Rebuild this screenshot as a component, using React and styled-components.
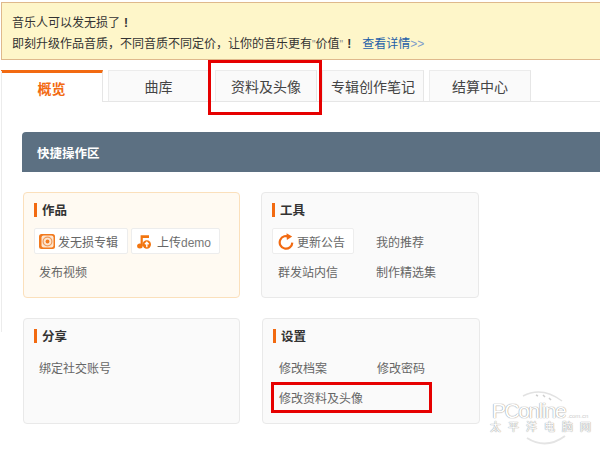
import React from "react";
import styled, { createGlobalStyle } from "styled-components";

const Global = createGlobalStyle`
  html, body { margin: 0; padding: 0; background: #fff; }
  body { font-family: "Noto Sans CJK SC", "Liberation Sans", sans-serif; font-size: 12px; color: #666; }
  * { box-sizing: border-box; }
`;

const Page = styled.div`
  position: relative;
  width: 600px;
  height: 450px;
  overflow: hidden;
  padding-top: 2px;
`;

const Notice = styled.div`
  height: 58px;
  margin-left: 1px;
  padding: 9px 0 0 10px;
  background: #fef6c9;
  border-top: 1px solid #dfb98c;
  border-bottom: 1px solid #dfb98c;
  border-left: 1px solid #dfb98c;
  color: #333;
  line-height: 20px;
`;

const NoticeLine = styled.div`
  white-space: nowrap;
`;

const Quote = styled.span`
  font-family: "Liberation Sans", sans-serif;
  color: #888;
  font-size: 10px;
`;

const Bang = styled.span`
  display: inline-block;
  width: 12px;
  text-align: center;
  font-weight: 700;
  font-family: "Liberation Sans", sans-serif;
`;

const DetailLink = styled.a`
  margin-left: 7px;
  color: #1f5fa8;
`;

const Arrows = styled.span`
  color: #7d9ccb;
  font-family: "Liberation Sans", sans-serif;
`;

const Tabs = styled.div`
  display: flex;
  height: 32px;
  margin: 10px 0 0 1px;
  border-bottom: 1px solid #e6e6e6;
`;

const Tab = styled.div`
  width: ${(p) => p.$w || 102}px;
  height: ${(p) => (p.$active ? "32px" : "31px")};
  margin-left: ${(p) => (p.$gap != null ? p.$gap : 5)}px;
  padding-bottom: ${(p) => (p.$active ? 0 : 1)}px;
  display: flex;
  align-items: center;
  justify-content: center;
  font-size: 14px;
  color: ${(p) => (p.$active ? "#f26a11" : "#444")};
  font-weight: ${(p) => (p.$active ? 700 : 400)};
  background: ${(p) => (p.$active ? "#fff" : "#fafafa")};
  border-top: ${(p) => (p.$active ? "3px solid #f26a11" : "1px solid #ececec")};
  border-left: ${(p) => (p.$active ? "none" : "1px solid #ececec")};
  border-right: 1px solid #e6e6e6;
`;

const Panel = styled.div`
  position: relative;
  padding: 30px 0 0 22px;

  &::before {
    content: "";
    position: absolute;
    left: 1px;
    top: -31px;
    width: 1px;
    height: 261px;
    background: #ececec;
  }
`;

const QuickBar = styled.div`
  height: 40px;
  padding-left: 15px;
  display: flex;
  align-items: center;
  background: #5c7082;
  border-top-left-radius: 4px;
  color: #fff;
  font-weight: 700;
  font-size: 12.5px;
`;

const CardRow = styled.div`
  display: flex;
  gap: ${(p) => p.$gap}px;
  margin: 20px 0 0 1px;
`;

const Card = styled.section`
  width: ${(p) => (p.$left ? 217 : 218)}px;
  height: 106px;
  padding: 10px 0 0 10px;
  background: ${(p) => (p.$warm ? "#fffaf2" : "#fafafa")};
  border: 1px solid ${(p) => (p.$warm ? "#fbe0bc" : "#e9e9e9")};
  border-radius: 4px;
`;

const CardTitle = styled.h3`
  margin: 0;
  height: 14px;
  padding-left: 5px;
  border-left: 3px solid #f26a11;
  color: #333;
  font-size: 12.5px;
  font-weight: 700;
  line-height: 14px;
`;

const Items = styled.div`
  display: flex;
  flex-wrap: wrap;
  margin-top: 11px;
  row-gap: 4px;
`;

const LinkItem = styled.div`
  width: ${(p) => p.$w || 98}px;
  height: 26px;
  padding-left: ${(p) => p.$pl || 6}px;
  display: flex;
  align-items: center;
  white-space: nowrap;
  color: #666;
`;

const IconButton = styled.div`
  width: ${(p) => p.$w}px;
  height: 26px;
  margin-right: ${(p) => p.$mr || 0}px;
  padding-left: ${(p) => p.$pl || 4}px;
  display: flex;
  align-items: center;
  gap: ${(p) => p.$iconGap || 3}px;
  white-space: nowrap;
  background: #fff;
  border: 1px solid #ededed;
  border-radius: 2px;
  color: #666;
`;

const Latin = styled.span`
  font-family: "Liberation Sans", sans-serif;
  color: #777;
`;

const RedBox = styled.div`
  position: absolute;
  left: ${(p) => p.$x}px;
  top: ${(p) => p.$y}px;
  width: ${(p) => p.$w}px;
  height: ${(p) => p.$h}px;
  border: 3px solid #e60000;
`;

const Watermark = styled.div`
  position: absolute;
  left: 490px;
  top: 388px;
  width: 104px;
  height: 60px;
  color: #fff;
`;

const WatermarkArc = styled.svg`
  position: absolute;
  left: 0;
  top: 0;
`;

const WatermarkName = styled.div`
  position: absolute;
  left: 2px;
  top: 14px;
  font-family: "Liberation Sans", sans-serif;
  font-size: 21px;
  line-height: 17px;
  letter-spacing: -1.5px;
  color: #fff;
  text-shadow: 0 0 1px #999, 0 0 1px #999;
  white-space: nowrap;
`;

const WatermarkDomain = styled.span`
  margin-left: 2px;
  font-size: 6px;
  letter-spacing: 0;
  color: #ccc;
  text-shadow: none;
`;

const WatermarkCn = styled.div`
  position: absolute;
  left: 0;
  top: 31px;
  font-size: 11px;
  line-height: 14px;
  letter-spacing: 7px;
  color: #fff;
  text-shadow: 0 0 1px #999, 0 0 1px #999;
  white-space: nowrap;
`;

const DiscIcon = () => (
  <svg width="16" height="15" viewBox="0 0 16 15">
    <rect x="0" y="0" width="16" height="15" rx="2.5" fill="#f27a1e" />
    <rect x="2.5" y="1.5" width="12" height="12" rx="2" fill="#fde6d0" />
    <circle cx="8.5" cy="7.5" r="4.4" fill="none" stroke="#ef9a5c" strokeWidth="1.2" />
    <circle cx="8.5" cy="7.5" r="1.9" fill="#f27a1e" />
  </svg>
);

const MusicUploadIcon = () => (
  <svg width="14" height="15" viewBox="0 0 14 15">
    <path d="M3.6 11.5V1.2H12V4H5.8V12" fill="#f2750f" />
    <ellipse cx="2.9" cy="12" rx="2.8" ry="2.5" fill="#f2750f" />
    <circle cx="9.8" cy="10.5" r="4.2" fill="#f2750f" />
    <path d="M9.8 13.2V8.6M7.9 10.3L9.8 8.2L11.7 10.3" fill="none" stroke="#fff" strokeWidth="1.4" />
  </svg>
);

const RefreshIcon = () => (
  <svg width="16" height="17" viewBox="0 0 16 17">
    <path d="M11.6 4.2A6.3 6.3 0 1 0 14.3 9.6" fill="none" stroke="#f26a11" strokeWidth="2.2" />
    <path d="M8.5 0.3L14.2 3.6L8.9 7Z" fill="#f26a11" />
  </svg>
);

const Arc = () => (
  <WatermarkArc width="104" height="60" viewBox="0 0 104 60">
    <path d="M33 8Q52 -2 72 13" fill="none" stroke="#e2e2e2" strokeWidth="1.5" />
    <path d="M37 50Q56 62 75 48" fill="none" stroke="#e4e4e4" strokeWidth="2" />
    <path d="M46 7L48 8M53 7L55 9M59 10L61 12" stroke="#cfcfcf" strokeWidth="1.5" />
  </WatermarkArc>
);

export default function App() {
  return (
    <Page>
      <Global />
      <Notice>
        <NoticeLine>音乐人可以发无损了<Bang>!</Bang></NoticeLine>
        <NoticeLine>
          即刻升级作品音质，不同音质不同定价，让你的音乐更有<Quote>"</Quote>价值<Quote>"</Quote>
          <Bang>!</Bang>
          <DetailLink>
            查看详情<Arrows>&gt;&gt;</Arrows>
          </DetailLink>
        </NoticeLine>
      </Notice>

      <Tabs>
        <Tab $active $gap={0}>概览</Tab>
        <Tab $w={101}>曲库</Tab>
        <Tab $gap={6}>资料及头像</Tab>
        <Tab>专辑创作笔记</Tab>
        <Tab>结算中心</Tab>
      </Tabs>

      <Panel>
        <QuickBar>快捷操作区</QuickBar>

        <CardRow $gap={21}>
          <Card $warm $left>
            <CardTitle>作品</CardTitle>
            <Items>
              <IconButton $w={94} $mr={3}>
                <DiscIcon />
                发无损专辑
              </IconButton>
              <IconButton $w={89} $pl={5} $iconGap={6}>
                <MusicUploadIcon />
                <span>上传<Latin>demo</Latin></span>
              </IconButton>
              <LinkItem $pl={5}>发布视频</LinkItem>
            </Items>
          </Card>
          <Card>
            <CardTitle>工具</CardTitle>
            <Items>
              <IconButton $w={82} $mr={16} $pl={5} $iconGap={3}>
                <RefreshIcon />
                更新公告
              </IconButton>
              <LinkItem>我的推荐</LinkItem>
              <LinkItem>群发站内信</LinkItem>
              <LinkItem>制作精选集</LinkItem>
            </Items>
          </Card>
        </CardRow>

        <CardRow $gap={22}>
          <Card $left>
            <CardTitle>分享</CardTitle>
            <Items>
              <LinkItem $w={120} $pl={5}>绑定社交账号</LinkItem>
            </Items>
          </Card>
          <Card>
            <CardTitle>设置</CardTitle>
            <Items>
              <LinkItem>修改档案</LinkItem>
              <LinkItem>修改密码</LinkItem>
              <LinkItem $w={150}>修改资料及头像</LinkItem>
            </Items>
          </Card>
        </CardRow>
      </Panel>

      <RedBox $x={208} $y={60} $w={114} $h={55} />
      <RedBox $x={271} $y={382} $w={161} $h={31} />

      <Watermark>
        <Arc />
        <WatermarkName>
          PConline<WatermarkDomain>.com.cn</WatermarkDomain>
        </WatermarkName>
        <WatermarkCn>太平洋电脑网</WatermarkCn>
      </Watermark>
    </Page>
  );
}
